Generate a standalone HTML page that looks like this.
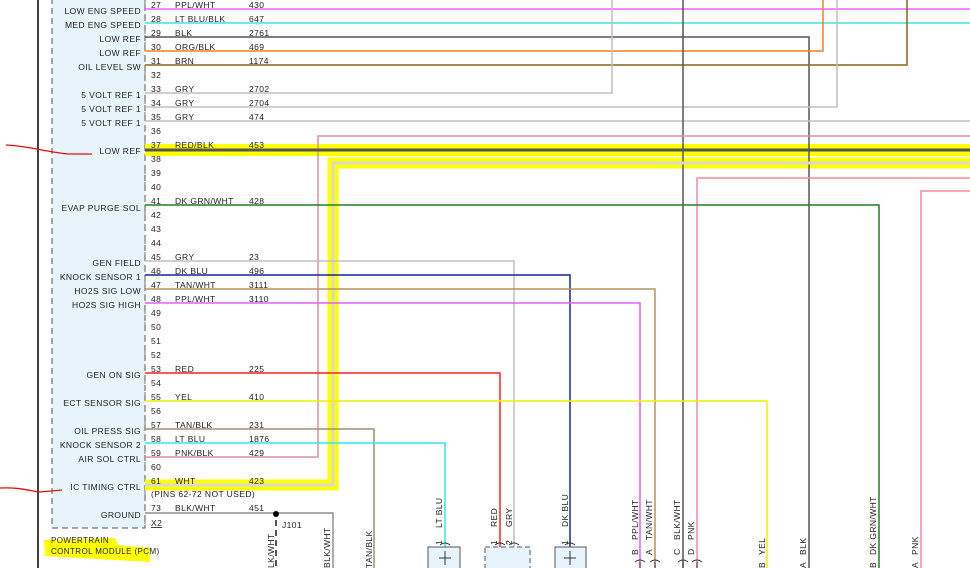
<!DOCTYPE html>
<html><head><meta charset="utf-8"><style>
html,body{margin:0;padding:0;background:#fff;width:970px;height:568px;overflow:hidden}
svg{display:block}
text{font-family:"Liberation Sans",sans-serif;font-size:8.5px;fill:#222;letter-spacing:0.4px}
.l{text-anchor:end}
.v{font-size:8.5px}
</style></head><body>
<svg width="970" height="568" viewBox="0 0 970 568" xmlns="http://www.w3.org/2000/svg">
<!-- frame line -->
<line x1="38" y1="0" x2="38" y2="568" stroke="#000" stroke-width="1.5"/>
<!-- PCM box -->
<rect x="52" y="-2" width="93" height="530" fill="#e8f4fb" stroke="#555" stroke-width="1" stroke-dasharray="6,4"/>
<!-- connector brackets -->
<g stroke="#555" stroke-width="0.8" fill="none">
<path d="M145 0v528" stroke-dasharray="6,8"/>
</g>
<!-- highlight bands -->
<rect x="145" y="144" width="825" height="12" fill="#ffff00"/>
<path d="M145 485H333V163H970" stroke="#ffff00" stroke-width="11" fill="none"/>
<!-- wires -->
<g fill="none" stroke-width="1.5">
<path d="M145 9H970" stroke="#f060f0"/>
<path d="M145 23H970" stroke="#40e0e8"/>
<path d="M145 37H809V568" stroke="#555"/>
<path d="M145 51H823V0" stroke="#f08020"/>
<path d="M145 65H907V0" stroke="#8a6418"/>
<path d="M145 93H612V0" stroke="#c0c0c0"/>
<path d="M145 107H837V0" stroke="#c0c0c0"/>
<path d="M145 121H970" stroke="#c0c0c0"/>
<path d="M683 0V568" stroke="#555"/>
<path d="M145 457H318V136H970" stroke="#e090a0"/>
<path d="M145 150H970" stroke="#555" stroke-width="3"/>
<path d="M145 485H333V163H970" stroke="#d8d8d8" stroke-width="3"/>
<path d="M697 568V178H970" stroke="#ff8898"/>
<path d="M921 568V191H970" stroke="#ff8898"/>
<path d="M145 205H879V568" stroke="#208020"/>
<path d="M145 261H514V568" stroke="#c0c0c0"/>
<path d="M145 275H570V568" stroke="#102890"/>
<path d="M145 289H655V568" stroke="#b89060"/>
<path d="M145 303H640V568" stroke="#e060f0"/>
<path d="M145 373H500V568" stroke="#ff2020"/>
<path d="M145 401H767V568" stroke="#f0f000"/>
<path d="M145 429H374V568" stroke="#a09070"/>
<path d="M145 443H445V568" stroke="#30e8f0"/>
<path d="M145 513H333V568" stroke="#777" stroke-width="1.2"/>
<path d="M276 520V568" stroke="#555" stroke-width="2" stroke-dasharray="6,4"/>
</g>
<circle cx="276" cy="514" r="3" fill="#000"/>
<!-- red annotations -->
<path d="M6 145C30 146 45 152 68 154L92 154" stroke="#e01010" stroke-width="1.3" fill="none"/>
<path d="M0 488C20 487 30 491 40 492L62 490" stroke="#e01010" stroke-width="1.3" fill="none"/>
<!-- yellow highlight PCM label -->
<path d="M44 540L115 538L118 545L150 548L150 562L45 556Z" fill="#ffff00"/>
<!-- pin labels -->
<g>
<text x="151" y="8">27</text><text x="175" y="8">PPL/WHT</text><text x="249" y="8">430</text>
<text class="l" x="141" y="14">LOW ENG SPEED</text>
<text x="151" y="22">28</text><text x="175" y="22">LT BLU/BLK</text><text x="249" y="22">647</text>
<text class="l" x="141" y="28">MED ENG SPEED</text>
<text x="151" y="36">29</text><text x="175" y="36">BLK</text><text x="249" y="36">2761</text>
<text class="l" x="141" y="42">LOW REF</text>
<text x="151" y="50">30</text><text x="175" y="50">ORG/BLK</text><text x="249" y="50">469</text>
<text class="l" x="141" y="56">LOW REF</text>
<text x="151" y="64">31</text><text x="175" y="64">BRN</text><text x="249" y="64">1174</text>
<text class="l" x="141" y="70">OIL LEVEL SW</text>
<text x="151" y="78">32</text>
<text x="151" y="92">33</text><text x="175" y="92">GRY</text><text x="249" y="92">2702</text>
<text class="l" x="141" y="98">5 VOLT REF 1</text>
<text x="151" y="106">34</text><text x="175" y="106">GRY</text><text x="249" y="106">2704</text>
<text class="l" x="141" y="112">5 VOLT REF 1</text>
<text x="151" y="120">35</text><text x="175" y="120">GRY</text><text x="249" y="120">474</text>
<text class="l" x="141" y="126">5 VOLT REF 1</text>
<text x="151" y="134">36</text>
<text x="151" y="148">37</text><text x="175" y="148">RED/BLK</text><text x="249" y="148">453</text>
<text class="l" x="141" y="154">LOW REF</text>
<text x="151" y="162">38</text><text x="151" y="176">39</text><text x="151" y="190">40</text>
<text x="151" y="204">41</text><text x="175" y="204">DK GRN/WHT</text><text x="249" y="204">428</text>
<text class="l" x="141" y="211">EVAP PURGE SOL</text>
<text x="151" y="218">42</text><text x="151" y="232">43</text><text x="151" y="246">44</text>
<text x="151" y="260">45</text><text x="175" y="260">GRY</text><text x="249" y="260">23</text>
<text class="l" x="141" y="266">GEN FIELD</text>
<text x="151" y="274">46</text><text x="175" y="274">DK BLU</text><text x="249" y="274">496</text>
<text class="l" x="141" y="280">KNOCK SENSOR 1</text>
<text x="151" y="288">47</text><text x="175" y="288">TAN/WHT</text><text x="249" y="288">3111</text>
<text class="l" x="141" y="294">HO2S SIG LOW</text>
<text x="151" y="302">48</text><text x="175" y="302">PPL/WHT</text><text x="249" y="302">3110</text>
<text class="l" x="141" y="308">HO2S SIG HIGH</text>
<text x="151" y="316">49</text><text x="151" y="330">50</text><text x="151" y="344">51</text><text x="151" y="358">52</text>
<text x="151" y="372">53</text><text x="175" y="372">RED</text><text x="249" y="372">225</text>
<text class="l" x="141" y="378">GEN ON SIG</text>
<text x="151" y="386">54</text>
<text x="151" y="400">55</text><text x="175" y="400">YEL</text><text x="249" y="400">410</text>
<text class="l" x="141" y="406">ECT SENSOR SIG</text>
<text x="151" y="414">56</text>
<text x="151" y="428">57</text><text x="175" y="428">TAN/BLK</text><text x="249" y="428">231</text>
<text class="l" x="141" y="434">OIL PRESS SIG</text>
<text x="151" y="442">58</text><text x="175" y="442">LT BLU</text><text x="249" y="442">1876</text>
<text class="l" x="141" y="448">KNOCK SENSOR 2</text>
<text x="151" y="456">59</text><text x="175" y="456">PNK/BLK</text><text x="249" y="456">429</text>
<text class="l" x="141" y="462">AIR SOL CTRL</text>
<text x="151" y="470">60</text>
<text x="151" y="484">61</text><text x="175" y="484">WHT</text><text x="249" y="484">423</text>
<text class="l" x="141" y="490">IC TIMING CTRL</text>
<text x="151" y="497">(PINS 62-72 NOT USED)</text>
<text x="151" y="511">73</text><text x="175" y="511">BLK/WHT</text><text x="249" y="511">451</text>
<text class="l" x="141" y="518">GROUND</text>
<text x="151" y="526" style="text-decoration:underline">X2</text>
<text x="282" y="528">J101</text>
<text x="51" y="543" style="font-size:8px">POWERTRAIN</text>
<text x="51" y="554" style="font-size:8px">CONTROL MODULE (PCM)</text>
</g>
<!-- vertical labels bottom -->
<g class="v">
<text transform="translate(274,568) rotate(-90)">LK/WHT</text>
<text transform="translate(330,568) rotate(-90)">BLK/WHT</text>
<text transform="translate(372,568) rotate(-90)">TAN/BLK</text>
<text transform="translate(442,528) rotate(-90)">LT BLU</text>
<text transform="translate(442,545) rotate(-90)">1</text>
<text transform="translate(497,527) rotate(-90)">RED</text>
<text transform="translate(497,545) rotate(-90)">1</text>
<text transform="translate(512,527) rotate(-90)">GRY</text>
<text transform="translate(512,545) rotate(-90)">2</text>
<text transform="translate(568,527) rotate(-90)">DK BLU</text>
<text transform="translate(568,545) rotate(-90)">1</text>
<text transform="translate(638,540) rotate(-90)">PPL/WHT</text>
<text transform="translate(638,555) rotate(-90)">B</text>
<text transform="translate(652,540) rotate(-90)">TAN/WHT</text>
<text transform="translate(652,555) rotate(-90)">A</text>
<text transform="translate(680,540) rotate(-90)">BLK/WHT</text>
<text transform="translate(680,555) rotate(-90)">C</text>
<text transform="translate(694,540) rotate(-90)">PNK</text>
<text transform="translate(694,555) rotate(-90)">D</text>
<text transform="translate(765,555) rotate(-90)">YEL</text>
<text transform="translate(765,568) rotate(-90)">B</text>
<text transform="translate(806,555) rotate(-90)">BLK</text>
<text transform="translate(806,568) rotate(-90)">A</text>
<text transform="translate(876,555) rotate(-90)">DK GRN/WHT</text>
<text transform="translate(876,568) rotate(-90)">B</text>
<text transform="translate(918,555) rotate(-90)">PNK</text>
<text transform="translate(918,568) rotate(-90)">A</text>
</g>
<!-- connectors -->
<g stroke="#555" fill="#e8f4fb" stroke-width="1">
<rect x="428" y="547" width="32" height="30"/>
<rect x="485" y="547" width="45" height="30" stroke-dasharray="5,3"/>
<rect x="555" y="547" width="31" height="30"/>
</g>
<g stroke="#333" fill="none" stroke-width="1">
<path d="M445 551v14M439 558h12"/><path d="M570 551v14M564 558h12"/>
<path d="M440 545q5-4 10 0M495 545q5-4 10 0M509 545q5-4 10 0M565 545q5-4 10 0"/>
<path d="M635 562q5-4 10 0M650 562q5-4 10 0M678 562q5-4 10 0M692 562q5-4 10 0"/>
<path d="M640 562v6M655 562v6M683 562v6M697 562v6"/>
</g>
</svg>
</body></html>
